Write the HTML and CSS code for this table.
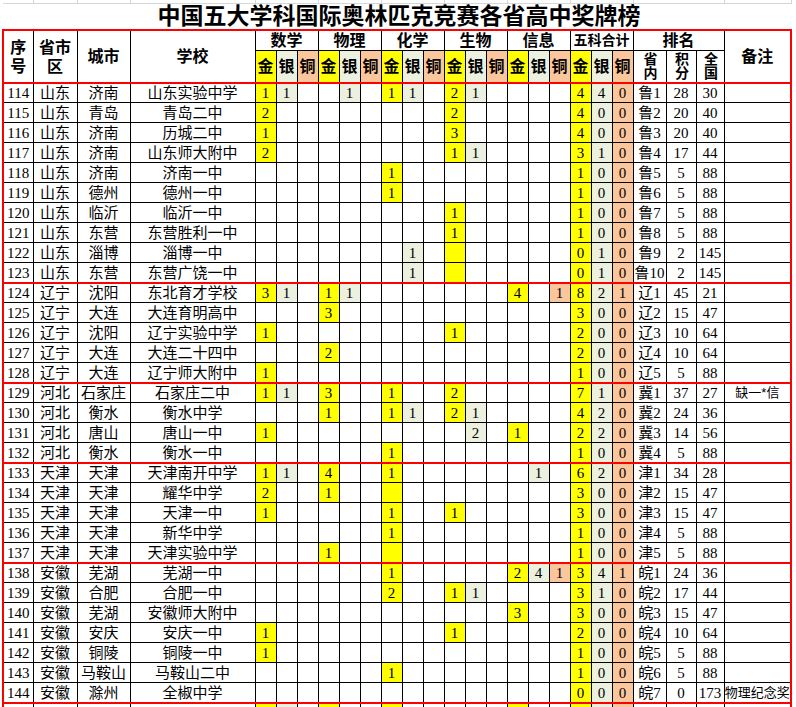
FILE: index.html
```html
<!DOCTYPE html>
<html lang="zh-CN">
<head>
<meta charset="utf-8">
<title>中国五大学科国际奥林匹克竞赛各省高中奖牌榜</title>
<link rel="stylesheet" href="styles.css">
</head>
<body>
<div class="sheet">
<table class="medals">
<colgroup>
<col class="w-no"><col class="w-prov"><col class="w-city"><col class="w-school">
<col class="w-m"><col class="w-m"><col class="w-m"><col class="w-m"><col class="w-m"><col class="w-m">
<col class="w-m"><col class="w-m"><col class="w-m"><col class="w-m"><col class="w-m"><col class="w-m">
<col class="w-m"><col class="w-m"><col class="w-m"><col class="w-m"><col class="w-m"><col class="w-m">
<col class="w-rp"><col class="w-rs"><col class="w-rn"><col class="w-note">
</colgroup>
<thead>
<tr class="top"><td></td><td></td><td></td><td></td><td colspan="3"></td><td colspan="3"></td><td colspan="3"></td><td colspan="3"></td><td colspan="3"></td><td colspan="3"></td><td colspan="3"></td><td></td></tr>
<tr class="title"><td colspan="26">中国五大学科国际奥林匹克竞赛各省高中奖牌榜</td></tr>
<tr class="h1">
<th rowspan="2" class="first">序<br>号</th><th rowspan="2">省市<br>区</th><th rowspan="2">城市</th><th rowspan="2">学校</th>
<th colspan="3">数学</th><th colspan="3">物理</th><th colspan="3">化学</th><th colspan="3">生物</th><th colspan="3">信息</th><th colspan="3" class="sum">五科合计</th><th colspan="3">排名</th>
<th rowspan="2" class="last">备注</th>
</tr>
<tr class="h2">
<th class="g">金</th><th class="s">银</th><th class="b">铜</th>
<th class="g">金</th><th class="s">银</th><th class="b">铜</th>
<th class="g">金</th><th class="s">银</th><th class="b">铜</th>
<th class="g">金</th><th class="s">银</th><th class="b">铜</th>
<th class="g">金</th><th class="s">银</th><th class="b">铜</th>
<th class="g">金</th><th class="s">银</th><th class="b">铜</th>
<th class="v"><span class="vt">省内</span></th><th class="v"><span class="vt">积分</span></th><th class="v"><span class="vt">全国</span></th>
</tr>
</thead>
<tbody>
<tr class="grp"><td>114</td><td>山东</td><td>济南</td><td>山东实验中学</td><td class="g">1</td><td class="s">1</td><td></td><td></td><td class="s">1</td><td></td><td class="g">1</td><td class="s">1</td><td></td><td class="g">2</td><td class="s">1</td><td></td><td></td><td></td><td></td><td class="g">4</td><td class="s">4</td><td class="b">0</td><td>鲁1</td><td>28</td><td>30</td><td></td></tr>
<tr><td>115</td><td>山东</td><td>青岛</td><td>青岛二中</td><td class="g">2</td><td></td><td></td><td></td><td></td><td></td><td></td><td></td><td></td><td class="g">2</td><td></td><td></td><td></td><td></td><td></td><td class="g">4</td><td class="s">0</td><td class="b">0</td><td>鲁2</td><td>20</td><td>40</td><td></td></tr>
<tr><td>116</td><td>山东</td><td>济南</td><td>历城二中</td><td class="g">1</td><td></td><td></td><td></td><td></td><td></td><td></td><td></td><td></td><td class="g">3</td><td></td><td></td><td></td><td></td><td></td><td class="g">4</td><td class="s">0</td><td class="b">0</td><td>鲁3</td><td>20</td><td>40</td><td></td></tr>
<tr><td>117</td><td>山东</td><td>济南</td><td>山东师大附中</td><td class="g">2</td><td></td><td></td><td></td><td></td><td></td><td></td><td></td><td></td><td class="g">1</td><td class="s">1</td><td></td><td></td><td></td><td></td><td class="g">3</td><td class="s">1</td><td class="b">0</td><td>鲁4</td><td>17</td><td>44</td><td></td></tr>
<tr><td>118</td><td>山东</td><td>济南</td><td>济南一中</td><td></td><td></td><td></td><td></td><td></td><td></td><td class="g">1</td><td></td><td></td><td></td><td></td><td></td><td></td><td></td><td></td><td class="g">1</td><td class="s">0</td><td class="b">0</td><td>鲁5</td><td>5</td><td>88</td><td></td></tr>
<tr><td>119</td><td>山东</td><td>德州</td><td>德州一中</td><td></td><td></td><td></td><td></td><td></td><td></td><td class="g">1</td><td></td><td></td><td></td><td></td><td></td><td></td><td></td><td></td><td class="g">1</td><td class="s">0</td><td class="b">0</td><td>鲁6</td><td>5</td><td>88</td><td></td></tr>
<tr><td>120</td><td>山东</td><td>临沂</td><td>临沂一中</td><td></td><td></td><td></td><td></td><td></td><td></td><td></td><td></td><td></td><td class="g">1</td><td></td><td></td><td></td><td></td><td></td><td class="g">1</td><td class="s">0</td><td class="b">0</td><td>鲁7</td><td>5</td><td>88</td><td></td></tr>
<tr><td>121</td><td>山东</td><td>东营</td><td>东营胜利一中</td><td></td><td></td><td></td><td></td><td></td><td></td><td></td><td></td><td></td><td class="g">1</td><td></td><td></td><td></td><td></td><td></td><td class="g">1</td><td class="s">0</td><td class="b">0</td><td>鲁8</td><td>5</td><td>88</td><td></td></tr>
<tr><td>122</td><td>山东</td><td>淄博</td><td>淄博一中</td><td></td><td></td><td></td><td></td><td></td><td></td><td></td><td class="s">1</td><td></td><td class="g"></td><td></td><td></td><td></td><td></td><td></td><td class="g">0</td><td class="s">1</td><td class="b">0</td><td>鲁9</td><td>2</td><td>145</td><td></td></tr>
<tr><td>123</td><td>山东</td><td>东营</td><td>东营广饶一中</td><td></td><td></td><td></td><td></td><td></td><td></td><td></td><td class="s">1</td><td></td><td class="g"></td><td></td><td></td><td></td><td></td><td></td><td class="g">0</td><td class="s">1</td><td class="b">0</td><td>鲁10</td><td>2</td><td>145</td><td></td></tr>
<tr class="grp"><td>124</td><td>辽宁</td><td>沈阳</td><td>东北育才学校</td><td class="g">3</td><td class="s">1</td><td></td><td class="g">1</td><td class="s">1</td><td></td><td></td><td></td><td></td><td></td><td></td><td></td><td class="g">4</td><td></td><td class="b">1</td><td class="g">8</td><td class="s">2</td><td class="b">1</td><td>辽1</td><td>45</td><td>21</td><td></td></tr>
<tr><td>125</td><td>辽宁</td><td>大连</td><td>大连育明高中</td><td></td><td></td><td></td><td class="g">3</td><td></td><td></td><td></td><td></td><td></td><td></td><td></td><td></td><td></td><td></td><td></td><td class="g">3</td><td class="s">0</td><td class="b">0</td><td>辽2</td><td>15</td><td>47</td><td></td></tr>
<tr><td>126</td><td>辽宁</td><td>沈阳</td><td>辽宁实验中学</td><td class="g">1</td><td></td><td></td><td></td><td></td><td></td><td></td><td></td><td></td><td class="g">1</td><td></td><td></td><td></td><td></td><td></td><td class="g">2</td><td class="s">0</td><td class="b">0</td><td>辽3</td><td>10</td><td>64</td><td></td></tr>
<tr><td>127</td><td>辽宁</td><td>大连</td><td>大连二十四中</td><td></td><td></td><td></td><td class="g">2</td><td></td><td></td><td></td><td></td><td></td><td></td><td></td><td></td><td></td><td></td><td></td><td class="g">2</td><td class="s">0</td><td class="b">0</td><td>辽4</td><td>10</td><td>64</td><td></td></tr>
<tr><td>128</td><td>辽宁</td><td>大连</td><td>辽宁师大附中</td><td class="g">1</td><td></td><td></td><td></td><td></td><td></td><td></td><td></td><td></td><td></td><td></td><td></td><td></td><td></td><td></td><td class="g">1</td><td class="s">0</td><td class="b">0</td><td>辽5</td><td>5</td><td>88</td><td></td></tr>
<tr class="grp"><td>129</td><td>河北</td><td>石家庄</td><td>石家庄二中</td><td class="g">1</td><td class="s">1</td><td></td><td class="g">3</td><td></td><td></td><td class="g">1</td><td></td><td></td><td class="g">2</td><td></td><td></td><td></td><td></td><td></td><td class="g">7</td><td class="s">1</td><td class="b">0</td><td>冀1</td><td>37</td><td>27</td><td class="note">缺一*信</td></tr>
<tr><td>130</td><td>河北</td><td>衡水</td><td>衡水中学</td><td></td><td></td><td></td><td class="g">1</td><td></td><td></td><td class="g">1</td><td class="s">1</td><td></td><td class="g">2</td><td class="s">1</td><td></td><td></td><td></td><td></td><td class="g">4</td><td class="s">2</td><td class="b">0</td><td>冀2</td><td>24</td><td>36</td><td></td></tr>
<tr><td>131</td><td>河北</td><td>唐山</td><td>唐山一中</td><td class="g">1</td><td></td><td></td><td></td><td></td><td></td><td></td><td></td><td></td><td></td><td class="s">2</td><td></td><td class="g">1</td><td></td><td></td><td class="g">2</td><td class="s">2</td><td class="b">0</td><td>冀3</td><td>14</td><td>56</td><td></td></tr>
<tr><td>132</td><td>河北</td><td>衡水</td><td>衡水一中</td><td></td><td></td><td></td><td></td><td></td><td></td><td class="g">1</td><td></td><td></td><td></td><td></td><td></td><td></td><td></td><td></td><td class="g">1</td><td class="s">0</td><td class="b">0</td><td>冀4</td><td>5</td><td>88</td><td></td></tr>
<tr class="grp"><td>133</td><td>天津</td><td>天津</td><td>天津南开中学</td><td class="g">1</td><td class="s">1</td><td></td><td class="g">4</td><td></td><td></td><td class="g">1</td><td></td><td></td><td></td><td></td><td></td><td></td><td class="s">1</td><td></td><td class="g">6</td><td class="s">2</td><td class="b">0</td><td>津1</td><td>34</td><td>28</td><td></td></tr>
<tr><td>134</td><td>天津</td><td>天津</td><td>耀华中学</td><td class="g">2</td><td></td><td></td><td class="g">1</td><td></td><td></td><td class="g"></td><td></td><td></td><td></td><td></td><td></td><td></td><td></td><td></td><td class="g">3</td><td class="s">0</td><td class="b">0</td><td>津2</td><td>15</td><td>47</td><td></td></tr>
<tr><td>135</td><td>天津</td><td>天津</td><td>天津一中</td><td class="g">1</td><td></td><td></td><td></td><td></td><td></td><td class="g">1</td><td></td><td></td><td class="g">1</td><td></td><td></td><td></td><td></td><td></td><td class="g">3</td><td class="s">0</td><td class="b">0</td><td>津3</td><td>15</td><td>47</td><td></td></tr>
<tr><td>136</td><td>天津</td><td>天津</td><td>新华中学</td><td></td><td></td><td></td><td></td><td></td><td></td><td class="g">1</td><td></td><td></td><td></td><td></td><td></td><td></td><td></td><td></td><td class="g">1</td><td class="s">0</td><td class="b">0</td><td>津4</td><td>5</td><td>88</td><td></td></tr>
<tr><td>137</td><td>天津</td><td>天津</td><td>天津实验中学</td><td></td><td></td><td></td><td class="g">1</td><td></td><td></td><td class="g"></td><td></td><td></td><td></td><td></td><td></td><td></td><td></td><td></td><td class="g">1</td><td class="s">0</td><td class="b">0</td><td>津5</td><td>5</td><td>88</td><td></td></tr>
<tr class="grp"><td>138</td><td>安徽</td><td>芜湖</td><td>芜湖一中</td><td></td><td></td><td></td><td></td><td></td><td></td><td class="g">1</td><td></td><td></td><td></td><td></td><td></td><td class="g">2</td><td class="s">4</td><td class="b">1</td><td class="g">3</td><td class="s">4</td><td class="b">1</td><td>皖1</td><td>24</td><td>36</td><td></td></tr>
<tr><td>139</td><td>安徽</td><td>合肥</td><td>合肥一中</td><td></td><td></td><td></td><td></td><td></td><td></td><td class="g">2</td><td></td><td></td><td class="g">1</td><td class="s">1</td><td></td><td></td><td></td><td></td><td class="g">3</td><td class="s">1</td><td class="b">0</td><td>皖2</td><td>17</td><td>44</td><td></td></tr>
<tr><td>140</td><td>安徽</td><td>芜湖</td><td>安徽师大附中</td><td></td><td></td><td></td><td></td><td></td><td></td><td></td><td></td><td></td><td></td><td></td><td></td><td class="g">3</td><td></td><td></td><td class="g">3</td><td class="s">0</td><td class="b">0</td><td>皖3</td><td>15</td><td>47</td><td></td></tr>
<tr><td>141</td><td>安徽</td><td>安庆</td><td>安庆一中</td><td class="g">1</td><td></td><td></td><td></td><td></td><td></td><td></td><td></td><td></td><td class="g">1</td><td></td><td></td><td></td><td></td><td></td><td class="g">2</td><td class="s">0</td><td class="b">0</td><td>皖4</td><td>10</td><td>64</td><td></td></tr>
<tr><td>142</td><td>安徽</td><td>铜陵</td><td>铜陵一中</td><td class="g">1</td><td></td><td></td><td></td><td></td><td></td><td></td><td></td><td></td><td></td><td></td><td></td><td></td><td></td><td></td><td class="g">1</td><td class="s">0</td><td class="b">0</td><td>皖5</td><td>5</td><td>88</td><td></td></tr>
<tr><td>143</td><td>安徽</td><td>马鞍山</td><td>马鞍山二中</td><td></td><td></td><td></td><td></td><td></td><td></td><td class="g">1</td><td></td><td></td><td></td><td></td><td></td><td></td><td></td><td></td><td class="g">1</td><td class="s">0</td><td class="b">0</td><td>皖6</td><td>5</td><td>88</td><td></td></tr>
<tr><td>144</td><td>安徽</td><td>滁州</td><td>全椒中学</td><td></td><td></td><td></td><td></td><td></td><td></td><td></td><td></td><td></td><td></td><td></td><td></td><td></td><td></td><td></td><td class="g">0</td><td class="s">0</td><td class="b">0</td><td>皖7</td><td>0</td><td>173</td><td class="note">物理纪念奖</td></tr>
<tr class="grp"><td></td><td></td><td></td><td></td><td class="g"></td><td class="s"></td><td></td><td class="g"></td><td></td><td></td><td class="g"></td><td></td><td></td><td></td><td></td><td></td><td class="g"></td><td></td><td></td><td class="g"></td><td class="s"></td><td class="b"></td><td></td><td></td><td></td><td></td></tr>
</tbody>
</table>
</div>
</body>
</html>
```
FILE: styles.css
```css
html, body {
  margin: 0;
  padding: 0;
  background: #ffffff;
}

.sheet {
  height: 707px;
  overflow: hidden;
  padding-left: 2px;
}

.medals {
  border-collapse: collapse;
  table-layout: fixed;
  width: 790px;
  font-family: "Liberation Serif", "Noto Sans CJK SC", serif;
  font-size: 15px;
  color: #000;
}

.w-no { width: 30px; }
.w-prov { width: 44px; }
.w-city { width: 53px; }
.w-school { width: 125px; }
.w-m { width: 21px; }
.w-rp { width: 33px; }
.w-rs { width: 30px; }
.w-rn { width: 28px; }
.w-note { width: 67px; }

.medals td,
.medals th {
  padding: 0;
  text-align: center;
  vertical-align: middle;
  white-space: nowrap;
  overflow: visible;
  border: 1px solid #000;
}

.medals td {
  height: 19px;
  line-height: 18px;
}

/* spreadsheet gridlines above the title */
.top td {
  height: 3px;
  line-height: 3px;
  border: none;
  border-right: 1px solid #d4d8de;
  border-bottom: 1px solid #d4d8de;
}

.title td {
  height: 25px;
  border: none;
  font-family: "Liberation Sans", "Noto Sans CJK SC", sans-serif;
  font-weight: 700;
  font-size: 23px;
  line-height: 25px;
  padding-left: 4px;
}

.medals th {
  font-family: "Liberation Sans", "Noto Sans CJK SC", sans-serif;
  font-weight: 700;
  font-size: 16px;
  line-height: 19px;
}

.h1 th {
  height: 19px;
  border-top: 2px solid #ff0000;
}

.h1 th.sum {
  font-size: 14px;
}

.h2 th {
  height: 31px;
}

.h2 th.v {
  font-size: 14px;
  line-height: 14px;
}

.vt {
  display: inline-block;
  writing-mode: vertical-rl;
  text-orientation: upright;
  line-height: 16px;
}

.h1 th.first { border-left: 2px solid #ff0000; }
.h1 th.last { border-right: 2px solid #ff0000; }

tbody td:first-child { border-left: 2px solid #ff0000; }
tbody td:last-child { border-right: 2px solid #ff0000; }
tbody tr.grp td {
  border-top: 2px solid #ff0000;
  height: 18px;
}

.g { background: #ffff00; }
.s { background: #ebf1de; }
.b { background: #fbc69c; }

td.note {
  font-family: "Liberation Sans", "Noto Sans CJK SC", sans-serif;
  font-size: 13px;
}
```
